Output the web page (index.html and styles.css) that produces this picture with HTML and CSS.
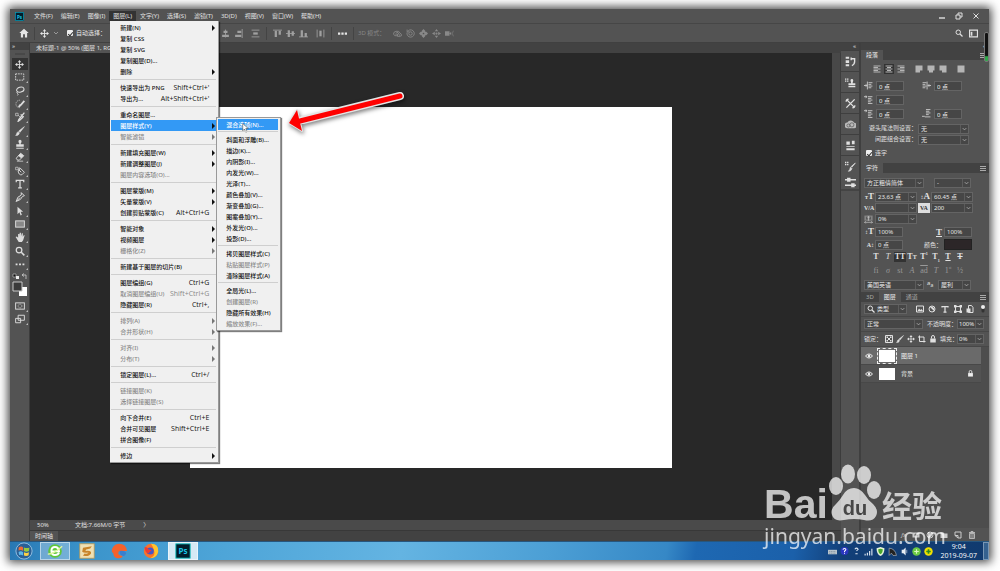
FILE: index.html
```html
<!DOCTYPE html>
<html lang="zh-CN">
<head>
<meta charset="utf-8">
<meta name="viewport" content="width=device-width, initial-scale=1">
<title>未标题-1 @ 50%</title>
<link rel="stylesheet" href="styles.css">
</head>
<body>
<svg class="defs" aria-hidden="true">
  <symbol id="chev" viewBox="0 0 8 8"><path d="M2 3l2 2 2-2" fill="none" stroke="currentColor"/></symbol>
  <symbol id="move" viewBox="0 0 16 16"><path d="M8 3v10M3 8h10" stroke="currentColor" stroke-width="1.6"/><path d="M8 0l3 4H5zM8 16l3-4H5zM0 8l4-3v6zM16 8l-4-3v6z" fill="currentColor"/></symbol>
  <symbol id="brush" viewBox="0 0 16 16"><path d="M15 1L8 10 6 8z M5 9l2 2c-1 4-3 4-6 4 2-1 1-4 4-6z" fill="currentColor" stroke="currentColor"/></symbol>
  <symbol id="eye" viewBox="0 0 16 16"><path d="M1 8q7-8 14 0q-7 8-14 0z" fill="none" stroke="currentColor" stroke-width="2"/><circle cx="8" cy="8" r="2.6" fill="currentColor"/></symbol>
  <symbol id="search" viewBox="0 0 16 16"><circle cx="6.5" cy="6.5" r="4.5" fill="none" stroke="currentColor" stroke-width="2"/><path d="M10 10l5 5" stroke="currentColor" stroke-width="2.4"/></symbol>
  <symbol id="lock" viewBox="0 0 16 16"><rect x="2.5" y="7" width="11" height="8" fill="currentColor"/><path d="M5 7V4a3 3 0 016 0v3" fill="none" stroke="currentColor" stroke-width="2"/></symbol>
  <symbol id="burger" viewBox="0 0 8 8"><path d="M1 2.5h6M1 4.5h6M1 6.5h6" stroke="currentColor"/></symbol>
  <symbol id="lines-l" viewBox="0 0 16 16"><path d="M1 2h14M1 5h9M1 8h14M1 11h9M1 14h14" stroke="currentColor" stroke-width="2.4"/></symbol>
  <symbol id="lines-c" viewBox="0 0 16 16"><path d="M1 2h14M4 5h8M1 8h14M4 11h8M1 14h14" stroke="currentColor" stroke-width="2.4"/></symbol>
  <symbol id="lines-r" viewBox="0 0 16 16"><path d="M1 2h14M6 5h9M1 8h14M6 11h9M1 14h14" stroke="currentColor" stroke-width="2.4"/></symbol>
  <symbol id="just-l" viewBox="0 0 16 16"><path d="M1 1h14v10h-5v4H1z" fill="currentColor"/></symbol>
  <symbol id="just-c" viewBox="0 0 16 16"><path d="M1 1h14v10h-3v4H4v-4H1z" fill="currentColor"/></symbol>
  <symbol id="just-r" viewBox="0 0 16 16"><path d="M1 1h14v14H6v-4H1z" fill="currentColor"/></symbol>
  <symbol id="just-a" viewBox="0 0 16 16"><path d="M1 1h14v14H1z" fill="currentColor"/></symbol>
  <symbol id="ind-l" viewBox="0 0 16 16"><path d="M0 8h6M6 1v14M8 3h7M8 6h5M8 9h7M8 12h5" stroke="currentColor" stroke-width="1.7"/><path d="M3 5l3 3-3 3z" fill="currentColor"/></symbol>
  <symbol id="ind-r" viewBox="0 0 16 16"><path d="M16 8h-6M9 1v14M1 3h7M1 6h5M1 9h7M1 12h5" stroke="currentColor" stroke-width="1.7"/><path d="M13 5l-3 3 3 3z" fill="currentColor"/></symbol>
  <symbol id="ind-f" viewBox="0 0 16 16"><path d="M0 3h5M7 3h8M7 6h6M7 9h8M7 12h5M7 15h8" stroke="currentColor" stroke-width="1.7"/><path d="M3 0l3 3-3 3z" fill="currentColor"/></symbol>
  <symbol id="ind-b" viewBox="0 0 16 16"><path d="M0 13h5M7 1h8M7 4h6M7 7h8M7 10h5M5 14h10" stroke="currentColor" stroke-width="1.7"/></symbol>
</svg>

<main class="window">
  <header class="menubar">
    <svg class="logo" viewBox="0 0 18 18" role="img" aria-label="Ps"><rect width="18" height="18" fill="#021d2b"/><rect x="1" y="1" width="16" height="16" fill="none" stroke="#0c9cb8" stroke-width="1.5"/><text x="9" y="13" text-anchor="middle" class="ps">Ps</text></svg>
    <nav class="menus">
      <button>文件(F)</button><button>编辑(E)</button><button>图像(I)</button>
      <div class="open">
        <button class="on">图层(L)</button>
        <ul class="drop">
          <li class="sub"><button>新建(N)</button></li>
          <li><button>复制 CSS</button></li>
          <li><button>复制 SVG</button></li>
          <li><button>复制图层(D)...</button></li>
          <li class="sub"><button>删除</button></li>
          <li class="sep"></li>
          <li><button>快速导出为 PNG<kbd>Shift+Ctrl+'</kbd></button></li>
          <li><button>导出为...<kbd>Alt+Shift+Ctrl+'</kbd></button></li>
          <li class="sep"></li>
          <li><button>重命名图层...</button></li>
          <li class="sub hot"><button>图层样式(Y)</button>
            <ul class="drop fly">
              <li class="hot"><button>混合选项(N)...</button>
                <svg class="cursor" viewBox="0 0 12 18"><path d="M1 1v13l3-3 2.500 5.500 2.500-1-2.500-5.500h4.500z" fill="#fff" stroke="#444"/></svg></li>
              <li class="sep"></li>
              <li><button>斜面和浮雕(B)...</button></li>
              <li><button>描边(K)...</button></li>
              <li><button>内阴影(I)...</button></li>
              <li><button>内发光(W)...</button></li>
              <li><button>光泽(T)...</button></li>
              <li><button>颜色叠加(V)...</button></li>
              <li><button>渐变叠加(G)...</button></li>
              <li><button>图案叠加(Y)...</button></li>
              <li><button>外发光(O)...</button></li>
              <li><button>投影(D)...</button></li>
              <li class="sep"></li>
              <li><button>拷贝图层样式(C)</button></li>
              <li><button disabled>粘贴图层样式(P)</button></li>
              <li><button>清除图层样式(A)</button></li>
              <li class="sep"></li>
              <li><button>全局光(L)...</button></li>
              <li><button disabled>创建图层(R)</button></li>
              <li><button>隐藏所有效果(H)</button></li>
              <li><button disabled>缩放效果(F)...</button></li>
            </ul>
          </li>
          <li class="sub dim"><button disabled>智能滤镜</button></li>
          <li class="sep"></li>
          <li class="sub"><button>新建填充图层(W)</button></li>
          <li class="sub"><button>新建调整图层(J)</button></li>
          <li><button disabled>图层内容选项(O)...</button></li>
          <li class="sep"></li>
          <li class="sub"><button>图层蒙版(M)</button></li>
          <li class="sub"><button>矢量蒙版(V)</button></li>
          <li><button>创建剪贴蒙版(C)<kbd>Alt+Ctrl+G</kbd></button></li>
          <li class="sep"></li>
          <li class="sub"><button>智能对象</button></li>
          <li class="sub"><button>视频图层</button></li>
          <li class="sub dim"><button disabled>栅格化(Z)</button></li>
          <li class="sep"></li>
          <li><button>新建基于图层的切片(B)</button></li>
          <li class="sep"></li>
          <li><button>图层编组(G)<kbd>Ctrl+G</kbd></button></li>
          <li><button disabled>取消图层编组(U)<kbd>Shift+Ctrl+G</kbd></button></li>
          <li><button>隐藏图层(R)<kbd>Ctrl+,</kbd></button></li>
          <li class="sep"></li>
          <li class="sub dim"><button disabled>排列(A)</button></li>
          <li class="sub dim"><button disabled>合并形状(H)</button></li>
          <li class="sep"></li>
          <li class="sub dim"><button disabled>对齐(I)</button></li>
          <li class="sub dim"><button disabled>分布(T)</button></li>
          <li class="sep"></li>
          <li><button>锁定图层(L)...<kbd>Ctrl+/</kbd></button></li>
          <li class="sep"></li>
          <li><button disabled>链接图层(K)</button></li>
          <li><button disabled>选择链接图层(S)</button></li>
          <li class="sep"></li>
          <li><button>向下合并(E)<kbd>Ctrl+E</kbd></button></li>
          <li><button>合并可见图层<kbd>Shift+Ctrl+E</kbd></button></li>
          <li><button>拼合图像(F)</button></li>
          <li class="sep"></li>
          <li class="sub"><button>修边</button></li>
        </ul>
      </div>
      <button>文字(Y)</button><button>选择(S)</button><button>滤镜(T)</button><button>3D(D)</button><button>视图(V)</button><button>窗口(W)</button><button>帮助(H)</button>
    </nav>
    <div class="winbtns">
      <button aria-label="最小化"><svg class="i8" viewBox="0 0 8 8"><path d="M1 6h6" stroke="currentColor" stroke-width="1.4"/></svg></button>
      <button aria-label="还原"><svg class="i8" viewBox="0 0 8 8"><path d="M1 3h4v4H1zM3 3V1h4v4H5" fill="none" stroke="currentColor"/></svg></button>
      <button aria-label="关闭"><svg class="i8" viewBox="0 0 8 8"><path d="M1.500 1.500l5 5m0-5l-5 5" stroke="currentColor"/></svg></button>
    </div>
  </header>

  <div class="options">
    <div class="opt-left">
      <svg class="i10" viewBox="0 0 16 16"><path d="M8 1l7.500 7H13v7h-3.500v-5h-3v5H3V8H.5z" fill="currentColor"/></svg>
      <i class="vr"></i>
      <svg class="i9"><use href="#move"/></svg>
      <svg class="i8 faint"><use href="#chev"/></svg>
      <label class="check"><input type="checkbox" checked>自动选择：</label>
    </div>
    <div class="opt-align">
      <svg class="i9" viewBox="0 0 16 16"><path d="M8 1v14" stroke="currentColor" stroke-width="1.500"/><path d="M4.500 3h7v4h-7zM2 10h12v4H2z" fill="currentColor"/></svg>
      <svg class="i9" viewBox="0 0 16 16"><path d="M14.500 0v16" stroke="currentColor" stroke-width="1.500"/><path d="M6 3h7v4H6zM2 10h11v4H2z" fill="currentColor"/></svg>
      <svg class="i9 gapl" viewBox="0 0 16 16"><path d="M1 2h14M1 14h14" stroke="currentColor" stroke-width="1.500"/><path d="M4 6h8v4H4z" fill="currentColor"/></svg>
      <i class="vr"></i>
      <svg class="i9" viewBox="0 0 16 16"><path d="M0 2h16" stroke="currentColor" stroke-width="1.500"/><path d="M3 3h4v11H3zM10 3h4v7h-4z" fill="currentColor"/></svg>
      <svg class="i9" viewBox="0 0 16 16"><path d="M0 8h16" stroke="currentColor" stroke-width="1.500"/><path d="M3 2h4v12H3zM10 4h4v8h-4z" fill="currentColor"/></svg>
      <svg class="i9" viewBox="0 0 16 16"><path d="M0 14h16" stroke="currentColor" stroke-width="1.500"/><path d="M3 2h4v12H3zM10 7h4v7h-4z" fill="currentColor"/></svg>
      <svg class="i9 gapl" viewBox="0 0 16 16"><path d="M2 1v14M14 1v14" stroke="currentColor" stroke-width="1.500"/><path d="M6 3h4v10H6z" fill="currentColor"/></svg>
      <i class="vr"></i>
      <svg class="i9 bright" viewBox="0 0 16 16"><path d="M0 6h4v4H0zM6 6h4v4H6zM12 6h4v4h-4z" fill="currentColor"/></svg>
      <i class="vr"></i>
    </div>
    <div class="opt-3d">
      <span>3D 模式：</span>
      <svg class="i9" viewBox="0 0 16 16"><path d="M1 9q-1-4 5-5 5-1 6 3 4 2 3 5-4 3-8 0-5 1-6-3zM5 5q5 0 7 7M4 9h4v4" fill="none" stroke="currentColor" stroke-width="1.600"/></svg>
      <svg class="i9" viewBox="0 0 16 16"><circle cx="8" cy="8" r="3" fill="none" stroke="currentColor" stroke-width="1.600"/><path d="M4 3a6.500 6.500 0 11-2 3M2 1v4h4" fill="none" stroke="currentColor" stroke-width="1.600"/></svg>
      <svg class="i9" viewBox="0 0 16 16"><path d="M8 0l3 3v2h2l3 3-3 3h-2v2l-3 3-3-3v-2H3L0 8l3-3h2V3z" fill="currentColor"/><circle cx="8" cy="8" r="1.500" fill="#535353"/></svg>
      <svg class="i9" viewBox="0 0 16 16"><path d="M8 0l3 4H5zM8 16l3-4H5zM0 8l5-3v6zM16 8l-5-3v6z" fill="currentColor"/><circle cx="8" cy="8" r="2" fill="currentColor"/></svg>
      <svg class="i9" viewBox="0 0 16 16"><path d="M0 4h8v8H0zM8 8l3-3v6z" fill="currentColor"/><path d="M15 3l-2 5 2 5" fill="none" stroke="currentColor"/></svg>
    </div>
    <div class="opt-right">
      <svg class="i8"><use href="#search"/></svg>
      <svg class="i9" viewBox="0 0 16 16"><path d="M1 2h14v12H1z" fill="none" stroke="currentColor" stroke-width="2"/><path d="M3 5h3v7H3z" fill="currentColor"/></svg>
    </div>
  </div>

  <div class="work">
    <aside class="tools">
      <span class="arrows">»</span>
      <i class="grip"></i>
      <div class="toolset">
        <button class="on" aria-label="移动"><svg class="i9"><use href="#move"/></svg></button>
        <button aria-label="矩形选框"><svg class="i10" viewBox="0 0 16 16"><rect x="1" y="3" width="13" height="10" fill="none" stroke="currentColor" stroke-width="1.500" stroke-dasharray="2.500 1.500"/></svg></button>
        <button aria-label="套索"><svg class="i10" viewBox="0 0 16 16"><ellipse cx="8.500" cy="6" rx="6" ry="4" transform="rotate(-15 8 6)" fill="none" stroke="currentColor" stroke-width="1.600"/><path d="M4 9q-2 2 0 3t0 3" fill="none" stroke="currentColor" stroke-width="1.500"/></svg></button>
        <button aria-label="快速选择"><svg class="i10" viewBox="0 0 16 16"><path d="M8 2a6 6 0 10-1 12" fill="none" stroke="currentColor" stroke-dasharray="2 1"/><path d="M15 3l-6 7M9 9l-3 4" stroke="currentColor" stroke-width="3"/></svg></button>
        <button aria-label="吸管"><svg class="i10" viewBox="0 0 16 16"><path d="M1 2h4v4H1zM5 5l3 3" fill="none" stroke="currentColor"/><path d="M15 1l-4 5M9 4l5 4M11 6l-5 6-1 3 3-2 5-5" fill="none" stroke="currentColor" stroke-width="2"/></svg></button>
        <button aria-label="画笔"><svg class="i10"><use href="#brush"/></svg></button>
        <button aria-label="仿制图章"><svg class="i10" viewBox="0 0 16 16"><path d="M5.500 3.500a2.500 2.500 0 015 0q0 2-1.500 4v1h5v4H2v-4h5v-1q-1.500-2-1.500-4zM2 14h12v1.500H2z" fill="currentColor"/></svg></button>
        <button aria-label="橡皮擦"><svg class="i10" viewBox="0 0 16 16"><path d="M9 2l5 4-7 7H4l-2-3z" fill="none" stroke="currentColor" stroke-width="1.500"/><path d="M9 2l5 4-4 4-5-4zM3 14h10v1H3z" fill="currentColor"/></svg></button>
        <button aria-label="油漆桶"><svg class="i10" viewBox="0 0 16 16"><path d="M1 2h4v4H1z" fill="none" stroke="currentColor"/><path d="M5 8l4-4 6 6-4 4q-5 1-6-6zM9 4q-3-3-3 2l4 4" fill="none" stroke="currentColor" stroke-width="1.500"/></svg></button>
        <button aria-label="文字"><svg class="i10" viewBox="0 0 16 16"><path d="M2 5V2h12v3M8 2v12M5 14h6" fill="none" stroke="currentColor" stroke-width="2"/></svg></button>
        <button aria-label="钢笔"><svg class="i10" viewBox="0 0 16 16"><path d="M10 1l5 5-3 1q-2 6-10 8 1-8 8-10zM2 15l6-6" fill="none" stroke="currentColor" stroke-width="1.600"/></svg></button>
        <button aria-label="路径选择"><svg class="i10" viewBox="0 0 16 16"><path d="M4 1v12l3-3 2 5 2-1-2-5h4z" fill="currentColor"/></svg></button>
        <button aria-label="矩形"><svg class="i10" viewBox="0 0 16 16"><rect x="1" y="3" width="14" height="10" fill="#888" stroke="currentColor" stroke-width="1.500"/></svg></button>
        <button aria-label="抓手"><svg class="i10" viewBox="0 0 16 16"><path d="M1 8l2-1 2 2V3h2v4l.5-6h2v6L11 2h1.500v6L14 5h1.500L13 13l-2 3H6z" fill="currentColor"/></svg></button>
        <button aria-label="缩放"><svg class="i10"><use href="#search"/></svg></button>
        <button aria-label="更多工具"><svg class="i10" viewBox="0 0 16 16"><path d="M1 7h3v3H1zM6.500 7h3v3h-3zM12 7h3v3h-3z" fill="currentColor"/></svg></button>
      </div>
      <svg class="swatches" viewBox="0 0 16 24"><path d="M1 1h3v3H1z" fill="#111" stroke="#ccc" stroke-width=".6"/><path d="M4 3h3v3H4z" fill="#eee"/><path d="M10 2h4v4M10 2l2-1.500M10 2l2 1.500" fill="none" stroke="#ccc" stroke-width=".8"/><path d="M7 14h8v9H7z" fill="#fff"/><path d="M1 9h9v9H1z" fill="#3a3a3a" stroke="#c8c8c8"/></svg>
      <button aria-label="快速蒙版"><svg class="i10" viewBox="0 0 16 16"><rect x="1" y="3" width="14" height="10" fill="none" stroke="currentColor" stroke-width="1.500"/><circle cx="8" cy="8" r="3" fill="none" stroke="currentColor" stroke-dasharray="2 1"/></svg></button>
      <button aria-label="屏幕模式"><svg class="i10" viewBox="0 0 16 16"><path d="M5 2h10v8H5zM1 7h8v7H1z" fill="#535353" stroke="currentColor" stroke-width="1.500"/></svg></button>
    </aside>

    <section class="doc">
      <div class="doctabs"><span>未标题-1 @ 50% (图层 1, RGB/8)</span></div>
      <div class="stage"><div class="canvas"><div class="paper"></div></div><i class="scroll"></i></div>
      <div class="status"><span class="zoomv">50%</span><span class="size">文档:7.66M/0 字节</span><span class="more">〉</span></div>
      <div class="timeline"><span class="tab">时间轴</span></div>
    </section>

    <aside class="dock">
      <span class="arrows right">«</span>
      <button aria-label="历史记录"><svg class="i11" viewBox="0 0 16 16"><path d="M1 1h5v3H1zM1 6h5v4H1zM1 12h5v3H1z" fill="currentColor"/><path d="M9 2v4M9 4h5v4q0 4-4 6" fill="none" stroke="currentColor" stroke-width="2"/></svg></button>
      <button aria-label="仿制源"><svg class="i11" viewBox="0 0 16 16"><path d="M0 2h2v2H0zM3 2h2v2H3zM0 5h2v2H0zM3 5h2v2H3zM8 5a2 2 0 014 0l-1 4h4v3H5V9h4zM5 13h10v2H5z" fill="currentColor"/></svg></button>
      <button aria-label="工具预设"><svg class="i11" viewBox="0 0 16 16"><path d="M2 2l12 12M14 2L2 14" stroke="currentColor" stroke-width="2"/><path d="M1 5l4-4M11 15l4-4" stroke="currentColor" stroke-width="2"/></svg></button>
      <button aria-label="库"><svg class="i11" viewBox="0 0 16 16"><path d="M4 13.500a4 4 0 01-.5-8.500 5.500 5.500 0 0110 .5 4 4 0 01-1 8z" fill="#bbb"/><circle cx="5" cy="9.500" r="2.200" fill="none" stroke="#535353"/><circle cx="10" cy="8.500" r="3" fill="none" stroke="#535353"/></svg></button>
      <button aria-label="属性"><svg class="i11" viewBox="0 0 16 16"><path d="M2 2h5v5H2zM10 1h4v5h-4zM2 9h12v1H2zM2 12h12v3H2z" fill="currentColor"/></svg></button>
      <button aria-label="画笔设置"><svg class="i11" viewBox="0 0 16 16"><path d="M0 1h2v2H0zM3 1h2v2H3zM0 4h2v2H0zM3 4h2v2H3z" fill="currentColor"/><path d="M15 3l-5 6 -1-1zM8 9l2 2q-1 4-5 4 2-2 3-6z" fill="currentColor" stroke="currentColor"/></svg></button>
      <button class="short" aria-label="画笔"><svg class="i11" viewBox="0 0 16 16"><path d="M0 4h16M0 12h16" stroke="currentColor" stroke-width="2"/><path d="M3 1h5v6H3zM9 9h5v6H9z" fill="currentColor"/></svg></button>
      <i class="dockend"></i>
    </aside>

    <aside class="panels">
      <span class="arrows right">«</span>
      <section>
        <div class="tabs"><button class="on">段落</button><svg class="i8"><use href="#burger"/></svg></div>
        <div class="body para">
          <div class="aligns">
            <svg class="i9"><use href="#lines-l"/></svg><svg class="i9 on"><use href="#lines-c"/></svg><svg class="i9"><use href="#lines-r"/></svg>
            <svg class="i9 gapl"><use href="#just-l"/></svg><svg class="i9"><use href="#just-c"/></svg><svg class="i9"><use href="#just-r"/></svg><svg class="i9 gapl"><use href="#just-a"/></svg>
          </div>
          <div class="fields">
            <svg class="i9"><use href="#ind-l"/></svg><input aria-label="左缩进" value="0 点">
            <svg class="i9"><use href="#ind-r"/></svg><input aria-label="右缩进" value="0 点">
            <svg class="i9"><use href="#ind-f"/></svg><input aria-label="首行缩进" value="0 点">
            <svg class="i9"><use href="#ind-f"/></svg><input aria-label="段前" value="0 点">
            <svg class="i9"><use href="#ind-b"/></svg><input aria-label="段后" value="0 点">
          </div>
          <div class="rules">
            <label for="kinsoku">避头尾法则设置：</label><span class="combo"><select id="kinsoku"><option>无</option></select><svg class="i8"><use href="#chev"/></svg></span>
            <label for="moji">间距组合设置：</label><span class="combo"><select id="moji"><option>无</option></select><svg class="i8"><use href="#chev"/></svg></span>
          </div>
          <label class="check"><input type="checkbox" checked>连字</label>
        </div>
      </section>

      <section>
        <div class="tabs"><button class="on">字符</button><svg class="i8"><use href="#burger"/></svg></div>
        <div class="body char">
          <div class="fontrow">
            <span class="combo"><select aria-label="字体"><option>方正粗倩简体</option></select><svg class="i8"><use href="#chev"/></svg></span>
            <span class="combo"><select aria-label="字体样式"><option>-</option></select><svg class="i8"><use href="#chev"/></svg></span>
          </div>
          <div class="metrics">
            <span class="glyph"><small>т</small>T</span><span class="combo"><input aria-label="字号" value="23.63 点"><svg class="i8"><use href="#chev"/></svg></span>
            <span class="glyph"><small>↕</small>A</span><span class="combo"><input aria-label="行距" value="60.45 点"><svg class="i8"><use href="#chev"/></svg></span>
            <span class="glyph sm">V/A</span><span class="combo"><input aria-label="字距微调" value=""><svg class="i8"><use href="#chev"/></svg></span>
            <span class="glyph sm inv">VA</span><span class="combo"><input aria-label="字距" value="200"><svg class="i8"><use href="#chev"/></svg></span>
            <svg class="i9" viewBox="0 0 16 16"><path d="M2 1v9M14 1v9M4 2h8M8 2v8M5 5h6M4 9h8M1 13h14M3 11l-2 2 2 2M13 11l2 2-2 2" fill="none" stroke="currentColor"/></svg><span class="combo"><input aria-label="比例间距" value="0%"><svg class="i8"><use href="#chev"/></svg></span>
          </div>
          <div class="metrics tall">
            <span class="glyph"><small>↕</small>T</span><input aria-label="垂直缩放" value="100%">
            <span class="pair"><span class="glyph under">T</span><input aria-label="水平缩放" value="100%"></span>
            <span class="glyph sm">A↕</span><input aria-label="基线偏移" value="0 点">
            <span class="pair"><label for="ink">颜色：</label><button id="ink" class="ink"></button></span>
          </div>
          <div class="styles"><b>T</b><i>T</i><b class="on">TT</b><b>T<small>T</small></b><b>T<sup>1</sup></b><b>T<sub>1</sub></b><b class="u">T</b><b class="s">T</b></div>
          <div class="styles faint"><span>fi</span><i>σ</i><span>st</span><i>A</i><span class="o">ad</span><i>T</i><span>1<sup>st</sup></span><span>½</span></div>
          <div class="langrow">
            <span class="combo"><select aria-label="语言"><option>美国英语</option></select><svg class="i8"><use href="#chev"/></svg></span>
            <span class="aa">a<sub>a</sub></span>
            <span class="combo"><select aria-label="消除锯齿"><option>犀利</option></select><svg class="i8"><use href="#chev"/></svg></span>
          </div>
        </div>
      </section>

      <section class="layers">
        <div class="tabs"><button>3D</button><button class="on">图层</button><button>通道</button><svg class="i8"><use href="#burger"/></svg></div>
        <div class="lrow filter">
          <span class="combo"><svg class="i8"><use href="#search"/></svg><select aria-label="类型"><option>类型</option></select><svg class="i8"><use href="#chev"/></svg></span>
          <svg class="i8" viewBox="0 0 16 16"><path d="M1 2h14v12H1z" fill="none" stroke="currentColor" stroke-width="2"/><path d="M3 12l3-5 3 3 2-2 3 4z" fill="currentColor"/></svg>
          <svg class="i8" viewBox="0 0 16 16"><circle cx="8" cy="8" r="6" fill="none" stroke="currentColor" stroke-width="2"/><path d="M4 4A6 6 0 0112 12z" fill="currentColor"/></svg>
          <svg class="i8" viewBox="0 0 16 16"><path d="M2 5V3h12v2M8 3v11M5 14h6" fill="none" stroke="currentColor" stroke-width="2.500"/></svg>
          <svg class="i8" viewBox="0 0 16 16"><path d="M3 3h10v10H3z" fill="none" stroke="currentColor" stroke-width="2"/><path d="M0 0h5v5H0zM11 0h5v5h-5zM0 11h5v5H0zM11 11h5v5h-5z" fill="currentColor"/></svg>
          <svg class="i8" viewBox="0 0 16 16"><path d="M5 1h6l3 4v10H5z" fill="none" stroke="currentColor" stroke-width="2"/><path d="M1 7h8v8H1z" fill="currentColor"/></svg>
          <svg class="i8" viewBox="0 0 16 16"><rect x="5" y="1" width="6" height="14" rx="3" fill="#333"/><circle cx="8" cy="4" r="4" fill="#eee"/></svg>
        </div>
        <div class="lrow">
          <span class="combo grow"><select aria-label="混合模式"><option>正常</option></select><svg class="i8"><use href="#chev"/></svg></span>
          <label for="opac">不透明度：</label><span class="combo pct"><input id="opac" value="100%"><svg class="i8"><use href="#chev"/></svg></span>
        </div>
        <div class="lrow locks">
          <span>锁定：</span>
          <svg class="i8" viewBox="0 0 16 16"><path d="M1 1h14v14H1z" fill="none" stroke="currentColor" stroke-width="2"/><path d="M3 3h3v3H3zM10 3h3v3h-3zM6 6h4v4H6zM3 10h3v3H3zM10 10h3v3h-3z" fill="currentColor"/></svg>
          <svg class="i8"><use href="#brush"/></svg>
          <svg class="i8"><use href="#move"/></svg>
          <svg class="i8" viewBox="0 0 16 16"><path d="M3 1v12h12M0 4h12v11" fill="none" stroke="currentColor" stroke-width="2"/></svg>
          <svg class="i8"><use href="#lock"/></svg>
          <label class="push" for="fill">填充：</label><span class="combo pct"><input id="fill" value="0%"><svg class="i8"><use href="#chev"/></svg></span>
        </div>
        <ul class="list">
          <li class="on"><svg class="i8"><use href="#eye"/></svg><span class="thumb sel"></span><span>图层 1</span></li>
          <li><svg class="i8"><use href="#eye"/></svg><span class="thumb"></span><span>背景</span><svg class="i7"><use href="#lock"/></svg></li>
        </ul>
        <div class="foot">
          <em>fx</em>
          <svg class="i8" viewBox="0 0 16 16"><path d="M1 3h14v10H1z" fill="currentColor"/><circle cx="8" cy="8" r="3" fill="#444"/></svg>
          <svg class="i8" viewBox="0 0 16 16"><circle cx="8" cy="8" r="6" fill="none" stroke="currentColor" stroke-width="2"/><path d="M4 12A6 6 0 0012 4z" fill="currentColor"/></svg>
          <svg class="i8" viewBox="0 0 16 16"><path d="M1 3h6l2 2h6v9H1z" fill="currentColor"/></svg>
          <svg class="i8" viewBox="0 0 16 16"><path d="M2 2h12v12H8L2 9zM8 14V9H2" fill="none" stroke="currentColor" stroke-width="2"/></svg>
          <svg class="i8" viewBox="0 0 16 16"><path d="M2 3h12M6 3V1h4v2M3 5h10v10H3zM6 6v8M10 6v8" fill="none" stroke="currentColor" stroke-width="1.600"/></svg>
        </div>
      </section>
    </aside>
  </div>

  <footer class="taskbar">
    <button class="start" aria-label="开始"><svg viewBox="0 0 20 20"><circle cx="10" cy="10" r="9" fill="#2a5f95" stroke="#9cc4e4"/><path d="M4 6q3-2 5 0v4q-2-2-5-.5z" fill="#ee6b35"/><path d="M10 6q3 1.500 6 0l-.5 4q-3 1.500-5.500 0z" fill="#97c93d"/><path d="M4 11q3-1.500 5 .5V15q-2-1.500-4.500-.5z" fill="#5bb7ea"/><path d="M10 11.500q3 1.500 5.500 0L15 15q-3 1-5 0z" fill="#fdd045"/></svg></button>
    <button class="run" aria-label="浏览器"><svg viewBox="0 0 20 20"><circle cx="10" cy="10" r="8.500" fill="#5fc73a"/><path d="M15 12q-1 3-5 3-4.500 0-4.500-5T10 5t5 5.500H6" fill="none" stroke="#fff" stroke-width="2.400"/><path d="M1 14q7 0 18-10" fill="none" stroke="#e4f7a0" stroke-width="1.500"/></svg></button>
    <button aria-label="文件"><svg viewBox="0 0 20 20"><rect x="1" y="1" width="18" height="18" fill="#efe0b4" stroke="#b99a55"/><path d="M5 6l11-2-2 3-5 1-1 2q8-1 7 3-2 4-10 3l2-3q4 1 5-1-6 1-8-1z" fill="#c8842a"/></svg></button>
    <button aria-label="浏览器二"><svg viewBox="0 0 20 20"><path d="M1 11Q1 2 10 1q9 0 10 9h-8q-3 0-3 3 1 3 6 3-2 4-7 3-5-1-5-6z" fill="#f4622c"/><path d="M11 10q7-1 8 3-3 5-6 2-2 0-2-5z" fill="#3a7ed0"/></svg></button>
    <button aria-label="火狐"><svg viewBox="0 0 20 20"><circle cx="10" cy="10" r="9" fill="#f9722c"/><path d="M10 1q10 0 9 10-2 8-10 8 7-3 5-9-1-5-4-9z" fill="#ffc52e"/><circle cx="9" cy="10" r="4.500" fill="#4656c8"/><path d="M2 5q4 0 5 3l4 1q-3 2-4 4-5-1-5-8z" fill="#ef3b35"/></svg></button>
    <button class="run lit" aria-label="Photoshop"><svg viewBox="0 0 18 18"><rect x="1" y="1" width="16" height="16" fill="#021d2b" stroke="#0bb" stroke-width="1"/><text x="9" y="12" text-anchor="middle" class="ps">Ps</text></svg></button>
    <div class="tray">
      <svg class="i9" viewBox="0 0 16 16"><path d="M0 5h16v8H0z" fill="#b8c4cc"/><path d="M2 8h12M2 11h12" stroke="#6a7a88" stroke-dasharray="2 1"/></svg>
      <svg class="i9" viewBox="0 0 16 16"><circle cx="8" cy="7" r="7" fill="#2a36c0"/><path d="M5.500 5q0-2.500 2.500-2.500t2.500 2q0 1.500-2.500 3V9M8 10v2" fill="none" stroke="#fff" stroke-width="1.800"/></svg>
      <svg class="i9" viewBox="0 0 16 16"><path d="M5 4q3-4 6 0l-3 3M6 12h4" fill="none" stroke="#dfe8f2" stroke-width="1.800"/></svg>
      <svg class="i9" viewBox="0 0 16 16"><path d="M1 15v-3h2v3zM5 15v-5h2v5zM9 15V7h2v8zM13 15V3h2v12z" fill="#dfe8f2"/></svg>
      <svg class="i9" viewBox="0 0 16 16"><path d="M1 2l7-2 7 2q0 11-7 14Q1 13 1 2z" fill="#e8f5d8"/><path d="M4 4l4-1 4 1q0 7-4 9-4-2-4-9z" fill="#48a82c"/></svg>
      <svg class="i9" viewBox="0 0 16 16"><path d="M2 2q11 1 13 13H9L6 11l-4 4z" fill="#222" stroke="#ccc"/></svg>
      <svg class="i9" viewBox="0 0 16 16"><path d="M3 5h3l4-4v14l-4-4H3z" fill="#e8eef4"/><path d="M12 5v6" stroke="#e8eef4"/></svg>
      <svg class="i9" viewBox="0 0 16 16"><circle cx="8" cy="8" r="7.500" fill="#6cc944"/><path d="M4 8h8M8 4v8" stroke="#d8f8c0" stroke-width="2"/></svg>
      <svg class="i9" viewBox="0 0 16 16"><circle cx="8" cy="8" r="7.500" fill="#f0e000"/><path d="M4 8h8M8 4v8" stroke="#2c8a20" stroke-width="3"/></svg>
    </div>
    <time class="clock"><span>9:04</span><span>2019-09-07</span></time>
    <button class="peek" aria-label="显示桌面"></button>
  </footer>
  <i class="gauge"></i>
</main>

<svg class="pointer" viewBox="0 0 122 50" aria-hidden="true"><g stroke-linejoin="round" stroke-linecap="round"><path d="M116 8L19 32" stroke="#e4e4e4" stroke-width="8"/><path d="M5 35l8-13 5 21z" fill="#e4e4e4" stroke="#e4e4e4" stroke-width="2"/><path d="M116 8L16 33" stroke="#f00" stroke-width="5"/><path d="M5 35l8-13 5 21z" fill="#f00"/></g></svg>

<div class="mark">
  <div class="brand"><b>Bai</b>
    <svg viewBox="0 0 54 58" aria-label="du"><g fill="#fff"><ellipse cx="8" cy="22" rx="7" ry="9"/><ellipse cx="20" cy="10" rx="7" ry="9.500"/><ellipse cx="36" cy="11" rx="7" ry="9"/><ellipse cx="46" cy="26" rx="7" ry="9"/><path d="M26 24q6 0 11 7 3 5 8 9 6 6 3 12-3 6-12 4-10-2-20 0-10 2-12-5-2-6 4-11 4-4 7-9 4-7 11-7z"/></g><text x="27" y="51" text-anchor="middle" class="du">du</text></svg>
    <strong>经验</strong></div>
  <span>jingyan.baidu.com</span>
</div>
</body>
</html>
```
FILE: styles.css
```css
* { box-sizing: border-box; }

body {
  margin: 0;
  min-height: 100vh;
  padding: 9px 11px 11px 10px;
  display: flex;
  position: relative;
  background: #fff;
  color: #e0e0e0;
  font: 6px/8px "Noto Sans", "Noto Sans CJK SC", sans-serif;
  overflow: hidden;
}

button, input, select {
  font: inherit;
  color: inherit;
  border: 0;
  margin: 0;
  padding: 0;
  background: none;
  border-radius: 0;
  appearance: none;
  text-align: left;
  min-width: 0;
}
ul { list-style: none; margin: 0; padding: 0; }
svg { display: block; flex: none; }
label, span, button { white-space: nowrap; }
.defs { position: absolute; width: 0; height: 0; }

.i7 { width: 7px; height: 7px; }
.i8 { width: 8px; height: 8px; }
.i9 { width: 9px; height: 9px; }
.i10 { width: 10px; height: 10px; }
.i11 { width: 11px; height: 11px; }
.faint { color: #999; }
.ps { font: 700 9px "Noto Sans", sans-serif; fill: #19c5e8; }

.window {
  flex: 1;
  position: relative;
  display: flex;
  flex-direction: column;
  background: #535353;
  box-shadow: 0 0 9px 2px rgba(0, 0, 0, .75);
}

/* menu bar */
.menubar {
  display: flex;
  align-items: center;
  height: 15px;
  padding-left: 5px;
  border-bottom: 1px solid #464646;
}
.logo { width: 9px; height: 9px; margin-right: 6px; }
.menus { display: flex; }
.menus > button, .open > button { height: 10px; padding: 0 4px; }
.open { position: relative; z-index: 5; }
.open > .on { background: #333; }
.winbtns { display: flex; margin-left: auto; margin-right: 9px; gap: 9px; }

.drop {
  position: absolute;
  top: 100%;
  left: 1px;
  width: 109px;
  padding: 1px 2px 1px 1px;
  background: #f0f0f0;
  border-right: 1px solid #999;
  border-bottom: 1px solid #999;
  box-shadow: 1px 1px 1px rgba(0, 0, 0, .5);
  color: #111;
  font-weight: 500;
}
.drop li { position: relative; height: 11px; }
.drop li > button {
  display: flex;
  justify-content: space-between;
  align-items: center;
  width: 100%;
  height: 100%;
  padding: 0 7px 0 9px;
}
.drop button:disabled { color: #8a8a8a; }
.drop kbd { font: 500 7px/8px "Open Sans", sans-serif; }
.drop .sep { height: 5px; padding-top: 2px; }
.drop .sep::before { content: ""; display: block; border-top: 1px solid #cfcfcf; }
.drop .sub::after {
  content: "";
  position: absolute;
  right: 1px;
  top: 3px;
  border: 3px solid transparent;
  border-left-color: #111;
  border-right: 0;
}
.drop .dim::after { border-left-color: #777; }
.drop .hot > button { background: #3399f5; color: #fff; }
.drop .fly { top: -3px; left: 105px; width: 65px; border: 1px solid #999; }
.fly .sep { height: 4px; padding-top: 1px; }
.fly li > button { padding: 0 0 0 8px; }
.cursor { position: absolute; left: 24px; top: 4px; width: 7px; height: 10px; }

/* options bar */
.options {
  display: flex;
  align-items: center;
  height: 19px;
  color: #a0a0a0;
  border-bottom: 1px solid #404040;
}
.opt-left { display: flex; align-items: center; gap: 3px; width: 211px; padding-left: 9px; color: #e6e6e6; }
.opt-left .check { margin-left: 4px; }
.opt-align, .opt-3d { display: flex; align-items: center; gap: 4px; }
.opt-align .gapl { margin-left: 4px; }
.vr { width: 1px; height: 13px; margin: 0 2px; background: #444; }
.opt-3d { color: #888; margin-left: 2px; }
.opt-3d span { margin-right: 4px; }
.bright { color: #e6e6e6; }
.opt-right { display: flex; gap: 6px; margin-left: auto; margin-right: 11px; color: #e0e0e0; }

.check { display: flex; align-items: center; gap: 3px; }
.check input {
  width: 6px;
  height: 6px;
  background: #eee;
  border-radius: 1px;
  display: grid;
  place-items: center;
}
.check input::before {
  content: "";
  width: 2px;
  height: 4px;
  border: solid #333;
  border-width: 0 1px 1px 0;
  transform: rotate(40deg);
}

.work { flex: 1; display: flex; min-height: 0; }

/* tools */
.tools {
  width: 20px;
  display: flex;
  flex-direction: column;
  align-items: center;
  border-right: 1px solid #3c3c3c;
}
.arrows { align-self: stretch; height: 7px; line-height: 6px; padding-left: 2px; background: #424242; }
.arrows.right { text-align: right; padding-right: 3px; }
.grip { width: 10px; height: 2px; margin: 3px 0 3px; background: #484848; }
.toolset { display: flex; flex-direction: column; justify-content: space-between; height: 212px; }
.tools button { display: grid; place-items: center; width: 16px; height: 12px; color: #ddd; position: relative; }
.tools button::after {
  content: "";
  position: absolute;
  right: 0;
  bottom: 0;
  border: 1px solid transparent;
  border-right-color: #bbb;
  border-bottom-color: #bbb;
}
.tools .on { background: #333; }
.tools .on::after { display: none; }
.swatches { width: 16px; height: 24px; margin: 3px 0 3px; }
.swatches + button { margin-bottom: 1px; }

/* document */
.doc { flex: 1; min-width: 0; display: flex; flex-direction: column; background: #424242; }
.doctabs { height: 10px; display: flex; }
.doctabs span { padding: 1px 6px; background: #535353; }
.stage { flex: 1; display: flex; }
.canvas { flex: 1; display: flex; padding: 54px 160px 52px; background: #282828; }
.paper { flex: 1; background: #fff; }
.scroll { width: 9px; background: #484848; border-right: 1px solid #3c3c3c; }
.status { display: flex; height: 10px; align-items: center; padding-left: 7px; background: #4a4a4a; }
.zoomv { width: 18px; margin-right: 20px; }
.more { margin-left: 18px; }
.timeline { display: flex; height: 11px; border-top: 1px solid #383838; }
.tab { padding: 1px 5px; background: #535353; }

/* icon dock */
.dock { width: 20px; display: flex; flex-direction: column; border-right: 2px solid #3f3f3f; }
.dock button { display: grid; place-items: center; height: 21px; border-top: 1px solid #3f3f3f; color: #e0e0e0; }
.dock .short { height: 13px; border-top: 0; }
.dockend { border-top: 2px solid #444; }

/* panels */
.panels { width: 128px; display: flex; flex-direction: column; background: #535353; }
.tabs { display: flex; align-items: stretch; height: 10px; background: #424242; color: #aaa; }
.tabs button { padding: 0 5px; }
.tabs .on { background: #535353; color: #eee; }
.tabs svg { margin: 1px 2px 0 auto; color: #aaa; }

.panels input:not([type]), .combo {
  height: 10px;
  background: #464646;
  border: 1px solid #646464;
  padding-left: 2px;
}
.panels .combo { display: flex; align-items: center; min-width: 0; color: #e6e6e6; }
.panels .combo input, .combo select { flex: 1; width: 100%; height: 8px; border: 0; background: none; padding: 0; }
.panels .combo > .i8:last-child { color: #aaa; border-left: 1px solid #5c5c5c; }

.para { height: 103px; padding: 2px 6px 0 3px; }
.aligns { display: flex; align-items: center; height: 14px; gap: 2px; padding-left: 8px; color: #b5b5b5; }
.aligns svg { padding: 1px; width: 10px; height: 10px; }
.aligns .gapl { margin-left: 6px; }
.aligns .on { background: #333; }
.fields {
  display: grid;
  grid-template-columns: 9px 28px 24px 28px;
  grid-auto-rows: 10px;
  gap: 4px 3px;
  padding-top: 5px;
  color: #c4c4c4;
}
.fields svg:nth-of-type(even), .fields svg:nth-of-type(5) { justify-self: end; }
.fields svg:nth-of-type(3), .fields svg:nth-of-type(4) { grid-column: 1; justify-self: start; }
.fields input { color: #eee; }
.rules {
  display: grid;
  grid-template-columns: 53px 51px;
  gap: 1px;
  padding-top: 5px;
  justify-items: end;
}
.rules .combo { width: 100%; }
.para > .check { padding: 4px 0 0 2px; }

.char { height: 119px; padding: 5px 6px 0 3px; }
.fontrow { display: grid; grid-template-columns: 60px 37px; gap: 10px; }
.metrics {
  display: grid;
  grid-template-columns: 10px 42px 12px 42px;
  column-gap: 1px;
  row-gap: 1px;
  padding-top: 3px;
  align-items: center;
}
.metrics.tall { grid-template-columns: 10px 28px 68px; row-gap: 2px; padding-top: 2px; }
.pair { display: flex; justify-content: flex-end; align-items: center; gap: 2px; }
.pair input { width: 28px; }
.glyph { font: 700 9px/10px "Liberation Serif", serif; text-align: right; }
.glyph small { font-size: 6px; }
.glyph.sm { font-size: 6px; }
.inv { background: #ddd; color: #333; text-align: center; }
.under { text-decoration: underline; }
.ink { width: 28px; height: 11px; background: #2c2628; border: 1px solid #222; }
.styles {
  display: grid;
  grid-template-columns: repeat(8, 12px);
  height: 14px;
  align-items: center;
  justify-items: center;
  padding-left: 6px;
  font: 8px/10px "Liberation Serif", serif;
}
.styles .on { background: #333; padding: 0 1px; }
.styles small { font-size: 6px; }
.styles sup, .styles sub { font-size: 4px; line-height: 4px; }
.u { text-decoration: underline; }
.s { text-decoration: line-through; }
.o { text-decoration: overline; }
.langrow { display: grid; grid-template-columns: 60px 8px 33px; gap: 3px; padding-top: 2px; }
.aa { line-height: 7px; }
.aa sub { font-size: 5px; line-height: 5px; }

.layers { flex: 1; display: flex; flex-direction: column; }
.lrow { display: flex; align-items: center; gap: 4px; height: 15px; padding: 0 5px 0 3px; border-bottom: 1px solid #474747; }
.filter { gap: 4px; padding-right: 2px; justify-content: space-between; }
.filter .combo { width: 43px; gap: 2px; margin-right: 4px; }
.locks { gap: 3px; }
.lrow .grow { flex: 1; }
.lrow .pct { flex: none; width: 27px; padding-left: 1px; }
.lrow label { margin-right: -4px; }
.lrow .push { margin-left: auto; }
.list { flex: 1; background: #4d4d4d; }
.list li { display: flex; align-items: center; gap: 6px; height: 18px; padding: 0 7px 0 4px; margin-right: 8px; background: #535353; border-bottom: 1px solid #484848; color: #eee; }
.list .on { background: #6a6a6a; }
.thumb { width: 16px; height: 12px; background: #fff; }
.sel { outline: 1px dashed #eee; outline-offset: 1px; }
.list .i7 { margin-left: auto; }
.foot { display: flex; align-items: center; justify-content: flex-end; gap: 6px; height: 13px; padding-right: 13px; color: #ccc; }

/* taskbar */
.taskbar {
  display: flex;
  align-items: stretch;
  height: 19px;
  background: linear-gradient(100deg, #2878b4 0, #3b94cb 8%, #4ea5d8 22%, #64b4e2 40%, #4c9fd5 55%, #3688c6 67%, #1e68b2 70%, #1b60aa 80%, #123f78 85%, #113a6e 100%);
  border-top: 1px solid #27567e;
}
.taskbar > button { display: grid; place-items: center; width: 30px; }
.taskbar > button + button { margin-right: 2px; }
.taskbar svg { width: 16px; height: 16px; }
.taskbar .start { width: 28px; margin-right: 2px; }
.taskbar .start svg { width: 18px; height: 18px; }
.run { background: rgba(255, 255, 255, .3); border: 1px solid rgba(255, 255, 255, .5); }
.taskbar .lit { background: #d5e9f5; }
.tray { display: flex; align-items: center; gap: 3px; margin-left: auto; margin-right: 7px; }
.taskbar .tray svg { width: 9px; height: 9px; }
.clock { display: flex; flex-direction: column; justify-content: center; text-align: center; font: 7px/9px "Open Sans", sans-serif; color: #fff; margin-right: 6px; }
.taskbar .peek { width: 6px; margin: 0; background: #35618f; border: 1px solid #7896b4; }

.gauge {
  position: absolute;
  right: 0;
  top: 23px;
  width: 5px;
  height: 30px;
  border: 1px solid #777;
  border-radius: 2px;
  background: linear-gradient(#111 80%, #2faa4a 85%);
}

/* callout arrow and site mark lie over the window */
.pointer { position: absolute; left: 284px; top: 88px; width: 122px; height: 50px; filter: drop-shadow(1px 2px 2px rgba(0, 0, 0, .5)); }
.mark { position: absolute; right: 54px; top: 464px; color: #fff; opacity: .72; }
.brand { display: flex; align-items: flex-start; height: 58px; }
.brand b { font: 700 41px/36px "Liberation Sans", sans-serif; padding-top: 22px; }
.brand svg { width: 54px; height: 58px; }
.brand strong { font: 700 30px/34px "Noto Sans CJK SC", sans-serif; padding-top: 23px; }
.mark > span { display: block; font: 21px/28px "Noto Sans", sans-serif; }
.du { font: 700 20px "Liberation Sans", sans-serif; fill: #444; }
```
